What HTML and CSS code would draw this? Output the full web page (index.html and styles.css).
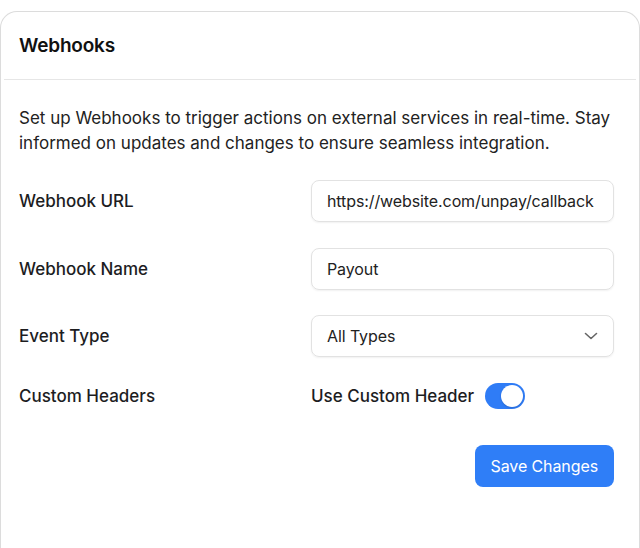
FILE: index.html
```html
<!DOCTYPE html>
<html>
<head>
<meta charset="utf-8">
<link rel="stylesheet" href="styles.css">
</head>
<body>
<div class="card">
  <div class="card-header"><h2 class="title">Webhooks</h2></div>
  <div class="divider"></div>
  <div class="card-body">
    <p class="desc">Set up Webhooks to trigger actions on external services in real-time. Stay informed on updates and changes to ensure seamless integration.</p>
    <div class="form">
      <label class="label">Webhook URL</label>
      <div class="input">https://website.com/unpay/callback</div>
      <label class="label">Webhook Name</label>
      <div class="input">Payout</div>
      <label class="label">Event Type</label>
      <div class="input select">
        <span>All Types</span>
        <svg class="chev" width="14" height="8" viewBox="0 0 14 8"><path d="M1.5 1.5 L7 6.5 L12.5 1.5" fill="none" stroke="#666" stroke-width="1.6" stroke-linecap="round" stroke-linejoin="round"/></svg>
      </div>
      <label class="label">Custom Headers</label>
      <div class="toggle-row">
        <span>Use Custom Header</span>
        <span class="toggle"><span class="knob"></span></span>
      </div>
    </div>
    <div class="actions"><button class="btn">Save Changes</button></div>
  </div>
</div>
</body>
</html>
```
FILE: styles.css
```css
* { box-sizing: border-box; }
html, body { margin: 0; padding: 0; background: #fff; }
body {
  padding-top: 11px;
  font-family: Inter, "Noto Sans", sans-serif;
  color: #1d1d1f;
}
.card {
  width: 640px;
  min-height: 560px;
  border: 1px solid #dcdcdc;
  border-bottom: none;
  border-radius: 17px 17px 0 0;
}
.card-header {
  height: 67px;
  display: flex;
  align-items: center;
  padding: 0 18px;
}
.title {
  margin: 0;
  font-size: 19px;
  font-weight: 600;
  color: #111;
  letter-spacing: -0.2px;
}
.divider {
  height: 1px;
  background: #e6e6e6;
  margin: 0 3px;
}
.card-body {
  padding: 26px 24px 0 18px;
}
.desc {
  margin: 0;
  font-size: 17px;
  line-height: 25px;
  letter-spacing: 0;
  color: #222;
}
.form {
  margin-top: 24px;
  display: grid;
  grid-template-columns: 292px 303px;
  row-gap: 25.5px;
  align-items: center;
}
.label {
  font-size: 17px;
  font-weight: 500;
  color: #1d1d1f;
  letter-spacing: 0;
}
.input {
  height: 42px;
  border: 1px solid #e2e2e2;
  border-radius: 8px;
  box-shadow: 0 1px 2px rgba(0,0,0,0.06);
  display: flex;
  align-items: center;
  padding: 0 15px;
  font-size: 16px;
  color: #222;
  letter-spacing: -0.1px;
}
.select { justify-content: space-between; padding-right: 15px; }
.chev { display: block; }
.toggle-row {
  display: flex;
  align-items: center;
  gap: 11px;
  font-size: 17px;
  font-weight: 500;
  color: #1d1d1f;
  letter-spacing: 0;
  height: 26px;
}
.toggle {
  width: 40px;
  height: 26px;
  border-radius: 13px;
  background: #2f7cf6;
  display: flex;
  align-items: center;
  justify-content: flex-end;
  padding: 2px;
}
.knob {
  width: 22px;
  height: 22px;
  border-radius: 50%;
  background: #fff;
  box-shadow: 0 1px 2px rgba(0,0,0,0.15);
}
.actions {
  display: flex;
  justify-content: flex-end;
  margin-top: 36px;
  width: 595px;
}
.btn {
  height: 42px;
  padding: 0 16px;
  border: none;
  border-radius: 8px;
  background: #2f7ef7;
  color: #fff;
  font-family: Inter, "Noto Sans", sans-serif;
  font-size: 16px;
  font-weight: 400;
  letter-spacing: -0.1px;
}
```
